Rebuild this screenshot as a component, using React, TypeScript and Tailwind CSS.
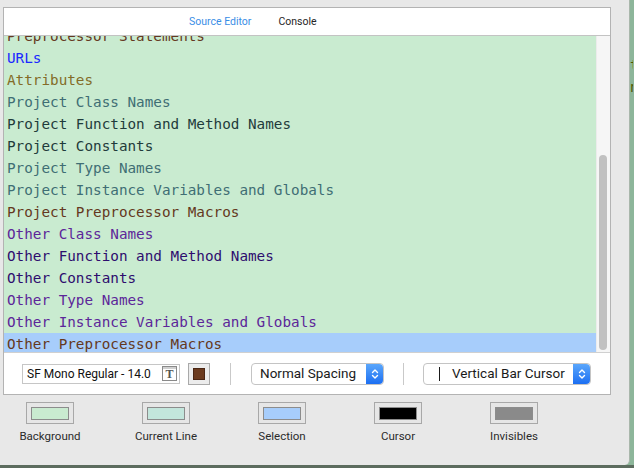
import React from "react";

type Line = { text: string; color: string };

const lines: Line[] = [
  { text: "Preprocessor Statements", color: "#643820" },
  { text: "URLs", color: "#1a28ff" },
  { text: "Attributes", color: "#836c28" },
  { text: "Project Class Names", color: "#3f6e74" },
  { text: "Project Function and Method Names", color: "#1f3b3b" },
  { text: "Project Constants", color: "#1f3b3b" },
  { text: "Project Type Names", color: "#3f6e74" },
  { text: "Project Instance Variables and Globals", color: "#3f6e74" },
  { text: "Project Preprocessor Macros", color: "#643820" },
  { text: "Other Class Names", color: "#5c2699" },
  { text: "Other Function and Method Names", color: "#2e0d6e" },
  { text: "Other Constants", color: "#2e0d6e" },
  { text: "Other Type Names", color: "#5c2699" },
  { text: "Other Instance Variables and Globals", color: "#5c2699" },
  { text: "Other Preprocessor Macros", color: "#643820" },
];

const wells = [
  { label: "Background", color: "#c9ebd0" },
  { label: "Current Line", color: "#c3e6dc" },
  { label: "Selection", color: "#a7cdfb" },
  { label: "Cursor", color: "#000000" },
  { label: "Invisibles", color: "#8a8a8a" },
];

const sans = { fontFamily: "Roboto, 'Liberation Sans', sans-serif" };

function Stepper() {
  return (
    <div className="flex h-full w-[17px] items-center justify-center rounded-r-[4px] bg-gradient-to-b from-[#5aa6fb] to-[#1b6ef2]">
      <svg width="8" height="12" viewBox="0 0 8 12" fill="none" stroke="white" strokeWidth="1.4" strokeLinecap="round" strokeLinejoin="round">
        <path d="M1.5 4.5 L4 2 L6.5 4.5" />
        <path d="M1.5 7.5 L4 10 L6.5 7.5" />
      </svg>
    </div>
  );
}

function Popup({ width, children }: { width: string; children: React.ReactNode }) {
  return (
    <div className={`flex h-[22px] ${width} items-center rounded-[4px] border border-[#c4c4c4] bg-white`}>
      <div className="flex flex-1 items-center text-[13.5px] text-[#1a1a1a]">{children}</div>
      <Stepper />
    </div>
  );
}

export default function App() {
  return (
    <div className="flex h-[468px] w-[634px] flex-col overflow-hidden bg-[#8db69a]" style={sans}>
      <div className="flex h-[465px]">
        <div className="flex w-[630px] flex-col rounded-br-[5px] border-r border-[#a9b7ab] bg-[#e8e8e8] pl-[3px] pt-[7px]">
          {/* white panel */}
          <div className="flex h-[388px] w-[608px] flex-col border border-[#b3b3b3] bg-white">
            <div className="flex h-[28px] items-center border-b border-[#c3c3c3] pl-[185px] text-[10.5px]">
              <span className="text-[#3a8ee6]">Source Editor</span>
              <span className="ml-[27px] text-[#262626]">Console</span>
            </div>
            <div className="flex h-[316px]">
              <div className="h-full w-[592px] overflow-hidden bg-[#c9ebd0]">
                <div className="-mt-[11px]" style={{ fontFamily: "'DejaVu Sans Mono', 'Liberation Mono', monospace" }}>
                  {lines.map((l, i) => (
                    <div
                      key={l.text}
                      className={`h-[22px] whitespace-pre pl-[3px] text-[14.3px] leading-[22px] ${i === lines.length - 1 ? "bg-[#a7cdfb]" : ""}`}
                      style={{ color: l.color }}
                    >
                      {l.text}
                    </div>
                  ))}
                </div>
              </div>
              <div className="flex h-full w-[14px] flex-col border-l border-[#ececec] bg-[#f6f6f6] pl-[2px] pr-[3px] pt-[119px] pb-[2px]">
                <div className="w-[8px] flex-1 rounded-full bg-[#c1c1c1]" />
              </div>
            </div>
            <div className="flex flex-1 items-center border-t border-[#d0d0d0] pl-[18px]">
              <div className="flex h-[20px] w-[158px] items-center border border-[#c6c6c6] bg-white pl-[4px] pr-[2px]">
                <span className="flex-1 text-[12px] text-[#111]">SF Mono Regular - 14.0</span>
                <span
                  className="flex h-[15px] w-[15px] items-center justify-center border border-[#8a8a8a] text-[12px] font-bold leading-none text-[#555]"
                  style={{ fontFamily: "'Liberation Serif', serif", boxShadow: "inset 0 2px 0 #d0d0d0" }}
                >
                  T
                </span>
              </div>
              <div className="ml-[8px] flex h-[22px] w-[22px] items-center justify-center border border-[#a9a9a9] bg-[#ececec]">
                <div className="h-[12px] w-[12px] border border-[#4a2614] bg-[#6b3a1e]" />
              </div>
              <div className="ml-[20px] h-[22px] w-px bg-[#c9c9c9]" />
              <div className="ml-[20px]">
                <Popup width="w-[133px]">
                  <span className="pl-[8px]">Normal Spacing</span>
                </Popup>
              </div>
              <div className="ml-[19px] h-[22px] w-px bg-[#c9c9c9]" />
              <div className="ml-[19px]">
                <Popup width="w-[168px]">
                  <span className="ml-[15px] h-[14px] w-px bg-[#1a1a1a]" />
                  <span className="pl-[12px]">Vertical Bar Cursor</span>
                </Popup>
              </div>
            </div>
          </div>
          {/* colour wells */}
          <div className="mt-[7px] flex gap-[22px]">
            {wells.map((w) => (
              <div key={w.label} className="flex w-[94px] flex-col items-center">
                <div className="flex h-[22px] w-[48px] items-center justify-center border border-[#a8a8a8] bg-[#e6e6e6]">
                  <div className="h-[13px] w-[38px] border border-[#8c8c8c]" style={{ backgroundColor: w.color }} />
                </div>
                <span className="mt-[4px] text-[11.5px] text-[#2b2b2b]">{w.label}</span>
              </div>
            ))}
          </div>
        </div>
        <div className="flex w-[3px] flex-col overflow-hidden pt-[54px] text-[14px] leading-[22px] text-[#4e5a00]" style={{ fontFamily: "'DejaVu Sans Mono', monospace" }}>
          <span>t</span>
          <span>n</span>
        </div>
      </div>
      <div className="h-[3px] bg-[#5c6c5e]" />
    </div>
  );
}
